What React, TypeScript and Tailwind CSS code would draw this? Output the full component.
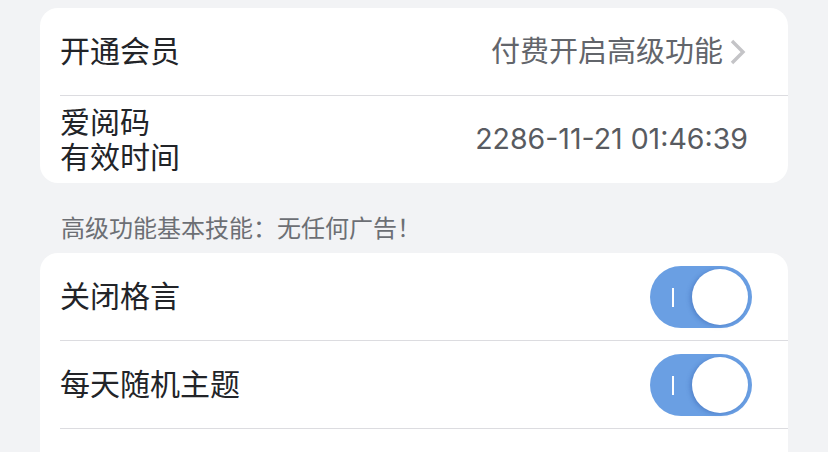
import React from 'react'

const font = { fontFamily: 'Inter, "Noto Sans CJK SC", sans-serif' }

const Toggle = () => (
  <div className="relative -mr-1 h-[62px] w-[102px] rounded-full bg-[#6a9fe3]">
    <div className="absolute left-[22px] top-[22px] h-[19px] w-[2px] bg-white" />
    <div className="absolute right-[4px] top-[3px] h-[56px] w-[56px] rounded-full bg-white shadow-[-2px_1px_4px_rgba(40,80,160,0.35)]" />
  </div>
)

const Row = ({ children, last }: { children: React.ReactNode; last?: boolean }) => (
  <div className="pl-5">
    <div
      className={
        last
          ? 'flex h-[87px] items-center justify-between pr-10'
          : 'flex h-[88px] items-center justify-between border-b border-[#dcdce0] pr-10'
      }
    >
      {children}
    </div>
  </div>
)

export default function App() {
  return (
    <div className="min-h-screen bg-[#f2f3f5] pt-2" style={font}>
      <div className="mx-10 overflow-hidden rounded-[18px] bg-white">
        <Row>
          <span className="text-[30px] text-[#222428]">开通会员</span>
          <span className="flex items-center text-[29px] text-[#62656b]">
            付费开启高级功能
            <svg width="22" height="30" viewBox="0 0 22 30" className="ml-[3px]">
              <path d="M6 4 L17 15 L6 26" fill="none" stroke="#c4c4c7" strokeWidth="3.4" />
            </svg>
          </span>
        </Row>
        <Row last>
          <span className="text-[30px] leading-[35px] text-[#222428]">
            爱阅码
            <br />
            有效时间
          </span>
          <span className="text-[28.5px] text-[#585b61]">2286-11-21 01:46:39</span>
        </Row>
      </div>
      <div className="px-[61px] pb-3 pt-[34px] text-[24px] leading-[24px] text-[#6c6f74]">
        高级功能基本技能：无任何广告！
      </div>
      <div className="mx-10 rounded-t-[18px] bg-white">
        <Row>
          <span className="text-[30px] text-[#222428]">关闭格言</span>
          <Toggle />
        </Row>
        <Row>
          <span className="text-[30px] text-[#222428]">每天随机主题</span>
          <Toggle />
        </Row>
        <Row>
          <span className="text-[30px] text-[#222428]"></span>
        </Row>
      </div>
    </div>
  )
}
